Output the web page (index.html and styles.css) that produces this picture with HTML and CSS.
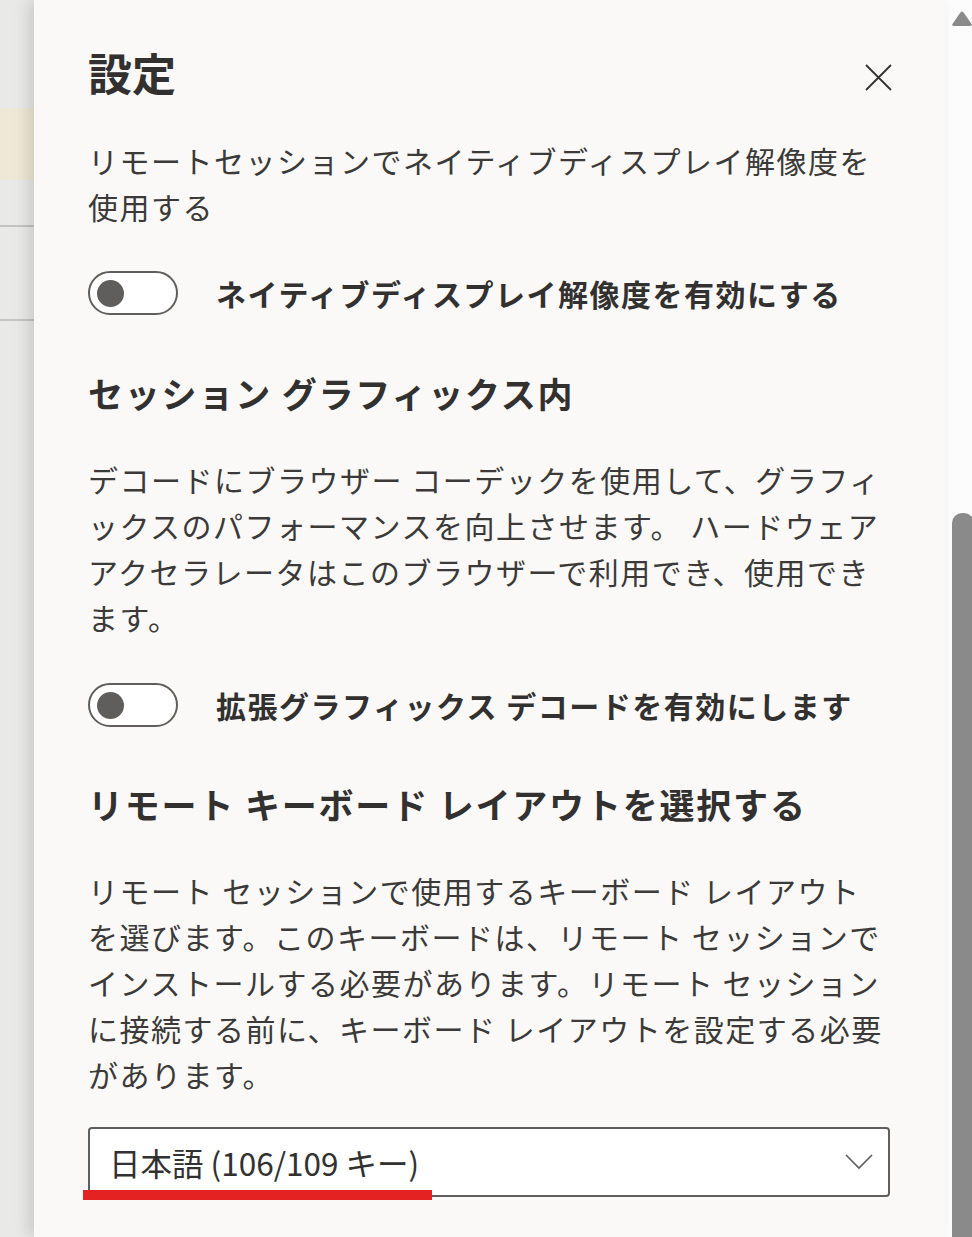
FILE: index.html
```html
<!DOCTYPE html>
<html lang="ja">
<head>
<meta charset="utf-8">
<title>設定</title>
<link rel="stylesheet" href="styles.css">
</head>
<body>
<div class="backdrop">
  <div class="bd-top"></div>
  <div class="bd-band"></div>
  <div class="bd-row1"></div>
  <div class="bd-row2"></div>
  <div class="bd-rest"></div>
</div>
<div class="panel">
  <div class="header">
    <h1 class="title">設定</h1>
    <svg class="close" width="27" height="27" viewBox="0 0 27 27"><path d="M1 1 L26 26 M26 1 L1 26" stroke="#323130" stroke-width="1.8" fill="none"/></svg>
  </div>
  <p class="para p1">リモートセッションでネイティブディスプレイ解像度を<br>使用する</p>
  <div class="toggle-row t1">
    <span class="toggle"><span class="knob"></span></span>
    <span class="toggle-label">ネイティブディスプレイ解像度を有効にする</span>
  </div>
  <h2 class="heading h-a">セッション グラフィックス内</h2>
  <p class="para p2">デコードにブラウザー コーデックを使用して、グラフィ<br>ックスのパフォーマンスを向上させます。 ハードウェア<br>アクセラレータはこのブラウザーで利用でき、使用でき<br>ます。</p>
  <div class="toggle-row t2">
    <span class="toggle"><span class="knob"></span></span>
    <span class="toggle-label">拡張グラフィックス デコードを有効にします</span>
  </div>
  <h2 class="heading h-b">リモート キーボード レイアウトを選択する</h2>
  <p class="para p3">リモート セッションで使用するキーボード レイアウト<br>を選びます。このキーボードは、リモート セッションで<br>インストールする必要があります。リモート セッション<br>に接続する前に、キーボード レイアウトを設定する必要<br>があります。</p>
  <div class="dropdown">
    <span class="dd-text">日本語 (106/109 キー)</span>
    <svg class="chev" width="28" height="16" viewBox="0 0 28 16"><path d="M1 1 L14 14 L27 1" stroke="#605e5c" stroke-width="1.6" fill="none"/></svg>
  </div>
</div>
<div class="scrollbar">
  <svg class="sb-up" width="22" height="17" viewBox="0 0 22 17"><path d="M11 1.5 Q12 1.5 13 3 L20.5 14 Q21.5 16 19 16 L3 16 Q0.5 16 1.5 14 L9 3 Q10 1.5 11 1.5 Z" fill="#8a8a8a"/></svg>
  <div class="sb-thumb"></div>
</div>
<div class="annotation"></div>
</body>
</html>
```
FILE: styles.css
```css
* { box-sizing: border-box; }
html, body { margin: 0; padding: 0; }
body {
  width: 972px;
  height: 1237px;
  overflow: hidden;
  display: flex;
  font-family: "Noto Sans CJK JP", "Noto Sans", sans-serif;
  color: #323130;
  background: #faf9f8;
  position: relative;
}
.backdrop {
  flex: 0 0 34px;
  display: flex;
  flex-direction: column;
  background: #e9e9e8;
}
.bd-top { height: 108px; }
.bd-band { height: 72px; background: #efe8d6; }
.bd-row1 { height: 47px; border-bottom: 2px solid #c4c4c3; }
.bd-row2 { height: 94px; border-bottom: 2px solid #c4c4c3; }
.bd-rest { flex: 1; }
.panel {
  flex: 0 0 911px;
  background: #faf9f8;
  padding: 0 55px 0 54px;
  box-shadow: -6px 0 14px rgba(0, 0, 0, 0.13);
  position: relative;
  z-index: 1;
}
.header {
  display: flex;
  justify-content: space-between;
  align-items: center;
  padding-top: 42px;
  padding-bottom: 3px;
  height: 105px;
}
.title {
  margin: 0;
  font-size: 44px;
  font-weight: 700;
  line-height: 60px;
}
.close { display: block; margin-right: -2px; margin-top: 10px; }
.para {
  margin: 0;
  font-size: 30px;
  line-height: 46px;
  letter-spacing: 1.5px;
  white-space: nowrap;
  color: #3b3a39;
}
.p1 { margin-top: 32px; }
.p2 { margin-top: 40px; }
.p3 { margin-top: 40px; }
.toggle-row {
  display: flex;
  align-items: center;
  gap: 38px;
}
.t1 { margin-top: 42px; }
.t2 { margin-top: 43px; }
.toggle {
  flex: 0 0 90px;
  height: 44px;
  border: 2px solid #605e5c;
  border-radius: 22px;
  background: #ffffff;
  display: flex;
  align-items: center;
  padding-left: 7px;
}
.knob {
  width: 27px;
  height: 27px;
  border-radius: 50%;
  background: #605e5c;
}
.toggle-label {
  font-size: 30px;
  font-weight: 700;
  letter-spacing: 1.5px;
  line-height: 44px;
  white-space: nowrap;
}
.heading {
  margin: 0;
  font-size: 35px;
  font-weight: 700;
  line-height: 46px;
  letter-spacing: 1.8px;
  white-space: nowrap;
}
.h-a { margin-top: 55px; }
.h-b { margin-top: 54px; }
.dropdown {
  margin-top: 30px;
  height: 70px;
  border: 2px solid #605e5c;
  border-radius: 4px;
  background: #ffffff;
  display: flex;
  align-items: center;
  justify-content: space-between;
  padding: 0 15px 0 19px;
}
.dd-text {
  font-size: 31.5px;
  line-height: 40px;
  color: #323130;
  white-space: nowrap;
}
.chev { display: block; }
.scrollbar {
  flex: 1;
  background: #fcfcfc;
  display: flex;
  flex-direction: column;
  padding-left: 6px;
}
.sb-up { display: block; margin-top: 10px; }
.sb-thumb {
  margin-top: 486px;
  margin-left: 1px;
  flex: 1;
  width: 22px;
  border-radius: 10px 10px 0 0;
  background: #8a8a8a;
}
.annotation {
  position: absolute;
  left: 83px;
  top: 1190px;
  width: 349px;
  height: 10px;
  background: #e52222;
  z-index: 2;
}
```
